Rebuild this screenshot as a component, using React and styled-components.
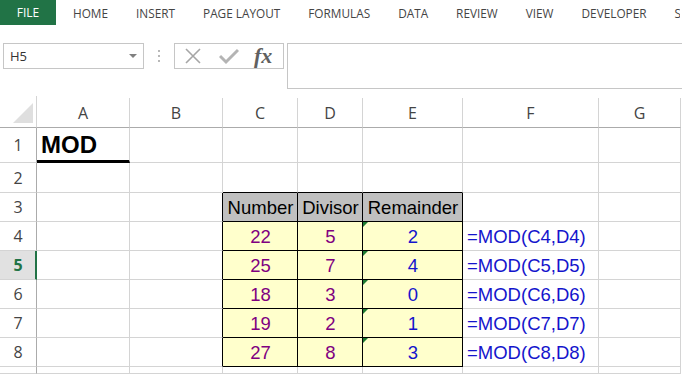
import React from "react";
import styled, { createGlobalStyle } from "styled-components";

const GlobalStyle = createGlobalStyle`
  body {
    margin: 0;
    background: #fff;
    overflow: hidden;
  }
`;

const GREEN = "#217346";
const GRID = "#d4d4d4";
const HEAD_LINE = "#ababab";

const COLS = [37, 93, 93, 75, 65, 100, 136, 82];
const LETTERS = ["A", "B", "C", "D", "E", "F", "G"];
const ROWS = [32, 35, 30, 29, 29, 29, 29, 29, 29, 7];

const TABS = ["HOME", "INSERT", "PAGE LAYOUT", "FORMULAS", "DATA", "REVIEW", "VIEW", "DEVELOPER", "S"];

const DATA = [
  [22, 5, 2],
  [25, 7, 4],
  [18, 3, 0],
  [19, 2, 1],
  [27, 8, 3],
];

const Page = styled.div`
  width: 695px;
  height: 383px;
  overflow: hidden;
  font-family: "Open Sans", "Noto Sans", sans-serif;
`;

const Ribbon = styled.div`
  display: flex;
  align-items: center;
  height: 25px;
  gap: 28px;
  white-space: nowrap;
  overflow: hidden;
  width: 680px;
`;

const FileTab = styled.div`
  flex-shrink: 0;
  width: 56px;
  height: 25px;
  margin-right: -11px;
  background: ${GREEN};
  color: #fff;
  font-size: 12px;
  display: flex;
  align-items: center;
  justify-content: center;
`;

const Tab = styled.div`
  flex-shrink: 0;
  font-size: 11.8px;
  color: #444;
`;

const FormulaBar = styled.div`
  display: flex;
  align-items: flex-start;
  margin-top: 18px;
  height: 46px;
`;

const NameBox = styled.div`
  margin-left: 3px;
  width: 141px;
  height: 26px;
  box-sizing: border-box;
  border: 1px solid #c6c6c6;
  display: flex;
  align-items: center;
  justify-content: space-between;
  padding: 0 6px 0 6px;
  font-size: 13px;
  color: #333;
`;

const Caret = styled.span`
  width: 0;
  height: 0;
  border-left: 4px solid transparent;
  border-right: 4px solid transparent;
  border-top: 4px solid #808080;
`;

const Dots = styled.div`
  width: 30px;
  height: 26px;
  display: flex;
  flex-direction: column;
  align-items: center;
  justify-content: center;
  gap: 3px;

  span {
    width: 2px;
    height: 2px;
    background: #b8b8b8;
  }
`;

const FxBox = styled.div`
  width: 110px;
  height: 26px;
  box-sizing: border-box;
  border: 1px solid #c6c6c6;
  display: flex;
  align-items: center;
  padding-left: 9px;
  gap: 17px;
`;

const Fx = styled.span`
  font-family: "Liberation Serif", "DejaVu Serif", serif;
  font-style: italic;
  font-weight: bold;
  font-size: 22px;
  line-height: 22px;
  color: #606060;
  margin-left: -2px;
`;

const FormulaInput = styled.div`
  margin-left: 3px;
  width: 395px;
  height: 46px;
  box-sizing: border-box;
  border: 1px solid #c6c6c6;
  border-right: none;
`;

const Sheet = styled.div`
  margin-top: 7px;
  display: grid;
  grid-template-columns: ${COLS.map((w) => w + "px").join(" ")};
  grid-template-rows: ${ROWS.map((h) => h + "px").join(" ")};
  width: 681px;
`;

const Corner = styled.div`
  position: relative;
  box-sizing: border-box;
  border-right: 1px solid ${GRID};
  border-bottom: 1px solid ${HEAD_LINE};

  &::after {
    content: "";
    position: absolute;
    right: 3px;
    bottom: 4px;
    width: 0;
    height: 0;
    border-left: 20px solid transparent;
    border-bottom: 20px solid #dfdfdf;
  }
`;

const ColHead = styled.div`
  box-sizing: border-box;
  margin-top: 2px;
  border-right: 1px solid ${GRID};
  border-bottom: 1px solid ${HEAD_LINE};
  display: flex;
  align-items: center;
  justify-content: center;
  font-size: 16px;
  color: #444;
`;

const RowHead = styled.div`
  box-sizing: border-box;
  border-right: ${(p) => (p.$selected ? `2px solid ${GREEN}` : `1px solid ${HEAD_LINE}`)};
  border-bottom: 1px solid ${GRID};
  background: ${(p) => (p.$selected ? "#e1e1e1" : "#fff")};
  color: ${(p) => (p.$selected ? GREEN : "#444")};
  font-weight: ${(p) => (p.$selected ? 700 : 400)};
  display: flex;
  align-items: center;
  justify-content: center;
  padding-left: ${(p) => (p.$selected ? "1px" : "0")};
  font-size: 16px;
`;

const Cell = styled.div`
  position: relative;
  box-sizing: border-box;
  display: flex;
  align-items: center;
  justify-content: ${(p) => p.$align || "flex-start"};
  padding: 2px 3px 0 4px;
  background: ${(p) => p.$bg || "#fff"};
  border-right: 1px solid ${(p) => p.$rc || GRID};
  border-bottom: ${(p) => p.$bw || 1}px solid ${(p) => p.$bc || GRID};
  font-family: "Liberation Sans", Arial, sans-serif;
  font-size: ${(p) => p.$size || 18.5}px;
  font-weight: ${(p) => (p.$bold ? 700 : 400)};
  color: ${(p) => p.$color || "#000"};
  white-space: nowrap;
`;

const Flag = styled.span`
  position: absolute;
  left: 0;
  top: 0;
  width: 0;
  height: 0;
  border-top: 5px solid #1d7b32;
  border-right: 5px solid transparent;
`;

function XIcon() {
  return (
    <svg width="18" height="18" viewBox="0 0 18 18">
      <path d="M2 2 L16 16 M16 2 L2 16" stroke="#a6a6a6" strokeWidth="1.6" fill="none" />
    </svg>
  );
}

function CheckIcon() {
  return (
    <svg width="20" height="18" viewBox="0 0 20 18">
      <path d="M1 9 L7 15 L19 3" stroke="#b4b4b4" strokeWidth="3" fill="none" />
    </svg>
  );
}

// cell props by row index (1-based) and column index (0 = A)
function cellProps(r, c) {
  const p = {};
  // black frame around C3:E8
  if (r === 2 && c >= 2 && c <= 4) p.$bc = "#000";
  if (r >= 3 && r <= 8 && c === 1) p.$rc = "#000";
  if (r >= 3 && r <= 8 && c >= 2 && c <= 4) {
    p.$rc = "#000";
    p.$bc = "#000";
    p.$align = "center";
    p.$bg = r === 3 ? "#c0c0c0" : "#ffffcc";
  }
  if (r === 1 && c === 0) {
    p.$bc = "#000";
    p.$bw = 3;
    p.$bold = true;
    p.$size = 24;
  }
  return p;
}

function cellContent(r, c) {
  if (r === 1 && c === 0) return "MOD";
  if (r === 3) return ["", "", "Number", "Divisor", "Remainder"][c] || "";
  if (r >= 4 && r <= 8) {
    const row = DATA[r - 4];
    if (c === 2 || c === 3) return row[c - 2];
    if (c === 4) return row[2];
    if (c === 5) return `=MOD(C${r},D${r})`;
  }
  return "";
}

function cellColor(r, c) {
  if (r >= 4 && r <= 8) {
    if (c === 2 || c === 3) return "#800080";
    if (c === 4 || c === 5) return "#1414cc";
  }
  return "#000";
}

export default function App() {
  const rows = [];
  for (let r = 1; r <= 9; r++) {
    rows.push(
      <RowHead key={`h${r}`} $selected={r === 5}>
        {r <= 8 ? r : ""}
      </RowHead>
    );
    LETTERS.forEach((_, c) => {
      rows.push(
        <Cell key={`${r}-${c}`} {...cellProps(r, c)} $color={cellColor(r, c)}>
          {r >= 4 && r <= 8 && c === 4 && <Flag />}
          {cellContent(r, c)}
        </Cell>
      );
    });
  }

  return (
    <Page>
      <GlobalStyle />
      <Ribbon>
        <FileTab>FILE</FileTab>
        {TABS.map((t) => (
          <Tab key={t}>{t}</Tab>
        ))}
      </Ribbon>
      <FormulaBar>
        <NameBox>
          H5
          <Caret />
        </NameBox>
        <Dots>
          <span />
          <span />
          <span />
        </Dots>
        <FxBox>
          <XIcon />
          <CheckIcon />
          <Fx>fx</Fx>
        </FxBox>
        <FormulaInput />
      </FormulaBar>
      <Sheet>
        <Corner />
        {LETTERS.map((l) => (
          <ColHead key={l}>{l}</ColHead>
        ))}
        {rows}
      </Sheet>
    </Page>
  );
}
